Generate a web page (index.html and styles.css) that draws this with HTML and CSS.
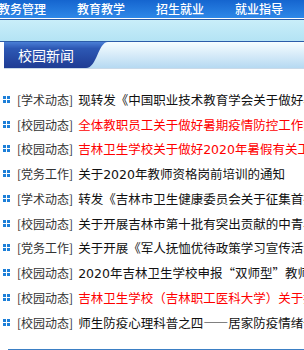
FILE: index.html
```html
<!DOCTYPE html>
<html lang="zh-CN">
<head>
  <meta charset="UTF-8" />
  <title>校园新闻</title>
  <meta name="viewport" content="width=device-width, initial-scale=1.0" />
  <link rel="stylesheet" href="styles.css">
</head>
<body>

<!-- Top menu -->
<div class="nav">
  <a href="#">教务管理</a>
  <a href="#">教育教学</a>
  <a href="#">招生就业</a>
  <a href="#">就业指导</a>
</div>
<div class="subnav"></div>

<!-- News block -->
<div class="news">
  <div class="news-head">
    <div class="news-tab">校园新闻</div>
    <svg class="news-curve" width="22" height="26" viewBox="0 0 22 26">
      <defs>
        <linearGradient id="tabGrad" x1="0" y1="0" x2="0" y2="1">
          <stop offset="0" stop-color="#4a7fd6" />
          <stop offset="0.25" stop-color="#2d58b4" />
          <stop offset="1" stop-color="#1f3c94" />
        </linearGradient>
      </defs>
      <path d="M0 0 H22 C12 0 11 26 0 26 Z" fill="url(#tabGrad)" />
    </svg>
  </div>

  <ul class="news-list">
    <li><span class="dot"></span><span class="cat">[学术动态]</span> <a href="#">现转发《中国职业技术教育学会关于做好暑期工作的通知》</a></li>
    <li><span class="dot"></span><span class="cat">[校园动态]</span> <a href="#" class="hot">全体教职员工关于做好暑期疫情防控工作的通知</a></li>
    <li><span class="dot"></span><span class="cat">[校园动态]</span> <a href="#" class="hot">吉林卫生学校关于做好<span class="num">2020</span>年暑假有关工作的通知</a></li>
    <li><span class="dot"></span><span class="cat">[党务工作]</span> <a href="#">关于<span class="num">2020</span>年教师资格岗前培训的通知</a></li>
    <li><span class="dot"></span><span class="cat">[学术动态]</span> <a href="#">转发《吉林市卫生健康委员会关于征集首批项目的通知》</a></li>
    <li><span class="dot"></span><span class="cat">[校园动态]</span> <a href="#">关于开展吉林市第十批有突出贡献的中青年专家评选</a></li>
    <li><span class="dot"></span><span class="cat">[党务工作]</span> <a href="#">关于开展《军人抚恤优待政策学习宣传活动》的通知</a></li>
    <li><span class="dot"></span><span class="cat">[校园动态]</span> <a href="#"><span class="num">2020</span>年吉林卫生学校申报“双师型”教师名单公示</a></li>
    <li><span class="dot"></span><span class="cat">[校园动态]</span> <a href="#" class="hot">吉林卫生学校（吉林职工医科大学）关于招生的公告</a></li>
    <li><span class="dot"></span><span class="cat">[校园动态]</span> <a href="#">师生防疫心理科普之四——居家防疫情绪调节</a></li>
  </ul>

  <div class="news-foot"></div>
</div>

</body>
</html>
```

FILE: styles.css
```css
* {
  box-sizing: border-box;
  margin: 0;
  padding: 0;
}

body {
  width: 304px;
  overflow: hidden;
  background: #fff;
  font-family: "Noto Sans CJK SC", "Microsoft YaHei", sans-serif;
  font-size: 12px;
}

a {
  text-decoration: none;
}

/* Top menu */
.nav {
  display: flex;
  gap: 31px;
  height: 19px;
  margin-left: -2px;
  white-space: nowrap;
  background: linear-gradient(#1565cf, #2e88e8);
  border-bottom: 1px solid #fff;
}

.nav a {
  color: #fff;
  font-weight: 500;
  line-height: 17px;
  flex-shrink: 0;
}

.subnav {
  height: 23px;
  background: linear-gradient(#c9eef9, #b4e3f4);
  border-top: 1px solid #2b5ca9;
  border-bottom: 1px solid #2b5ca9;
}

/* News block */
.news-head {
  display: flex;
  height: 27px;
  margin-left: 4px;
  background: linear-gradient(#f6fdff, #b6d9f2);
  border-bottom: 1px solid #c9d9e8;
}

.news-tab {
  width: 82px;
  padding-left: 14px;
  color: #fff;
  font-size: 14px;
  line-height: 26px;
  background: linear-gradient(#4a7fd6, #2d58b4 25%, #1f3c94);
}

.news-curve {
  display: block;
  flex-shrink: 0;
}

.news-list {
  list-style: none;
  margin-top: 18px;
  padding-left: 3px;
  font-size: 12.5px;
}

.news-list li {
  display: flex;
  align-items: center;
  height: 24.75px;
  white-space: nowrap;
}

.dot {
  flex-shrink: 0;
  width: 7px;
  height: 7px;
  margin-right: 7px;
  background:
    linear-gradient(#fff, #fff) center / 100% 1px no-repeat,
    linear-gradient(#fff, #fff) center / 1px 100% no-repeat,
    #1d7fd8;
}

.cat {
  color: #333;
  font-size: 12px;
  margin-right: 5px;
}

.news-list a {
  color: #111;
}

.news-list a.hot {
  color: #f00;
}

.num {
  font-family: "DejaVu Sans", sans-serif;
}

.news-foot {
  height: 2px;
  margin: 14px 0 0 8px;
  background: #3b7fc4;
}
```
